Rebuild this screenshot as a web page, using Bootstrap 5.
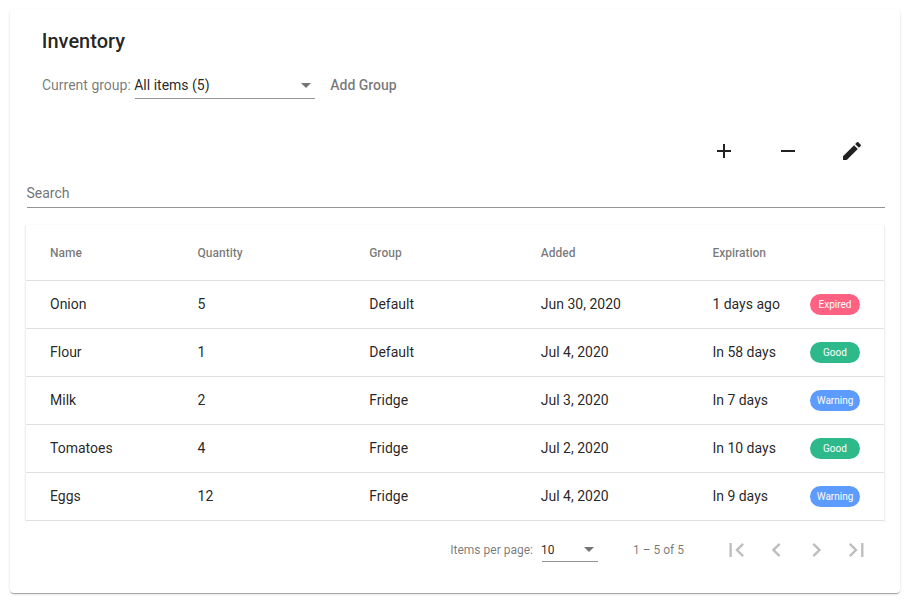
<!DOCTYPE html>
<html lang="en">
<head>
<meta charset="utf-8">
<meta name="viewport" content="width=device-width, initial-scale=1">
<title>Inventory</title>
<link href="https://cdn.jsdelivr.net/npm/bootstrap@5.3.0/dist/css/bootstrap.min.css" rel="stylesheet">
<style>
body { font-family: Roboto, "Liberation Sans", sans-serif; font-size: 14px; line-height: 20px; color: rgba(0,0,0,.87); background: #fff; }
.panel { margin: 10px; height: 583px; padding: 16px; border-radius: 4px; background: #fff; }
.raised { box-shadow: 0 2px 1px -1px rgba(0,0,0,.2), 0 1px 1px 0 rgba(0,0,0,.14), 0 1px 3px 0 rgba(0,0,0,.12); }
.title { font-size: 20px; font-weight: 500; line-height: 32px; margin: -1px 0 0 -.2px; }
.group-bar { height: 24px; margin-top: 16px; }
.picker { border-bottom: 1px solid #949494; color: rgba(0,0,0,.87); }
.group-picker { width: 180px; height: 26px; margin: 2px 0 0 4px; padding-bottom: 1px; }
.picker-value { margin-left: -.6px; }
.caret { width: 0; height: 0; border: 5px solid transparent; border-top-color: #757575; border-bottom: 0; margin-right: 4px; }
.plain { border: 0; background: none; padding: 0; color: inherit; }
.add-link { margin-left: 15.4px; font-weight: 500; }
.muted { color: rgba(0,0,0,.54); }
.tools { height: 36px; margin-top: 36px; }
.tools button { width: 64px; }
.search { display: block; width: 858px; height: 25px; margin: 14px 0 0 1px; padding: 0 0 5px; border: 0; border-bottom: 1px solid #949494; outline: 0; line-height: 20px; text-indent: -.5px; }
.search::placeholder { color: #757575; opacity: 1; }
.sheet { margin-top: 17px; height: 296px; }
.sheet table { table-layout: fixed; width: 100%; height: 296px; border-collapse: separate; border-spacing: 0; }
.sheet th, .sheet td { padding: 0; height: 48px; border-bottom: 1px solid #e0e0e0; vertical-align: middle; }
.sheet td { padding-bottom: 2px; }
.sheet th { height: 56px; font-size: 12px; font-weight: 500; color: rgba(0,0,0,.54); }
.sheet th:first-child, .sheet td:first-child { padding-left: 24px; }
.sheet td:last-child { padding-right: 24px; }
.tag { width: 50px; height: 21px; margin: 1px 0 -1px; border-radius: 11px; font-size: 10px; line-height: 21px; color: #fff; text-align: center; }
.tag-expired { background: #ff6183; }
.tag-good { background: #2eb98b; }
.tag-warning { background: #5c9bff; }
.pager { position: relative; height: 56px; padding: 2px 8px 0 0; font-size: 12px; background: #fff; }
.size-picker { width: 56px; height: 24px; margin: 0 35px 0 9px; }
.pager .picker-value { margin-left: -1px; }
.range { margin-right: 32px; }
.pager button { width: 40px; height: 40px; color: rgba(0,0,0,.26); }
svg { display: block; margin: auto; fill: currentColor; }
</style>
</head>
<body>
<main class="panel raised">
  <div class="px-3">
    <h1 class="title">Inventory</h1>
    <div class="group-bar d-flex align-items-center">
      <span class="muted">Current group:</span>
      <div class="picker group-picker d-flex align-items-center justify-content-between"><span class="picker-value">All items (5)</span><span class="caret"></span></div>
      <button class="plain add-link muted">Add Group</button>
    </div>
  </div>
  <div class="tools d-flex justify-content-end">
    <button class="plain" aria-label="Add"><svg width="24" height="24" viewBox="0 0 24 24"><path d="M19 13h-6v6h-2v-6H5v-2h6V5h2v6h6v2z"/></svg></button>
    <button class="plain" aria-label="Remove"><svg width="24" height="24" viewBox="0 0 24 24"><path d="M19 13H5v-2h14v2z"/></svg></button>
    <button class="plain" aria-label="Edit"><svg width="24" height="24" viewBox="0 0 24 24"><path d="M3 17.25V21h3.75L17.81 9.94l-3.75-3.75L3 17.25zM20.71 7.04c.39-.39.39-1.02 0-1.41l-2.34-2.34c-.39-.39-1.02-.39-1.41 0l-1.83 1.83 3.75 3.75 1.83-1.83z"/></svg></button>
  </div>
  <input class="search" type="text" placeholder="Search">
  <div class="sheet raised">
    <table>
      <thead><tr><th>Name</th><th>Quantity</th><th>Group</th><th>Added</th><th>Expiration</th></tr></thead>
      <tbody>
        <tr><td>Onion</td><td>5</td><td>Default</td><td>Jun 30, 2020</td><td><div class="d-flex justify-content-between align-items-center"><span>1 days ago</span><span class="tag tag-expired">Expired</span></div></td></tr>
        <tr><td>Flour</td><td>1</td><td>Default</td><td>Jul 4, 2020</td><td><div class="d-flex justify-content-between align-items-center"><span>In 58 days</span><span class="tag tag-good">Good</span></div></td></tr>
        <tr><td>Milk</td><td>2</td><td>Fridge</td><td>Jul 3, 2020</td><td><div class="d-flex justify-content-between align-items-center"><span>In 7 days</span><span class="tag tag-warning">Warning</span></div></td></tr>
        <tr><td>Tomatoes</td><td>4</td><td>Fridge</td><td>Jul 2, 2020</td><td><div class="d-flex justify-content-between align-items-center"><span>In 10 days</span><span class="tag tag-good">Good</span></div></td></tr>
        <tr><td>Eggs</td><td>12</td><td>Fridge</td><td>Jul 4, 2020</td><td><div class="d-flex justify-content-between align-items-center"><span>In 9 days</span><span class="tag tag-warning">Warning</span></div></td></tr>
      </tbody>
    </table>
  </div>
  <div class="pager muted d-flex align-items-center justify-content-end">
    <span>Items per page:</span>
    <div class="picker size-picker d-flex align-items-center justify-content-between"><span class="picker-value">10</span><span class="caret"></span></div>
    <span class="range">1 – 5 of 5</span>
    <button class="plain" aria-label="First page" disabled><svg width="28" height="28" viewBox="-.4 0 24 24"><path d="M18.41 16.59L13.82 12l4.59-4.59L17 6l-6 6 6 6zM6 6h2v12H6z"/></svg></button>
    <button class="plain" aria-label="Previous page" disabled><svg width="28" height="28" viewBox="-.4 0 24 24"><path d="M15.41 7.41L14 6l-6 6 6 6 1.41-1.41L10.83 12z"/></svg></button>
    <button class="plain" aria-label="Next page" disabled><svg width="28" height="28" viewBox="-.4 0 24 24"><path d="M10 6L8.59 7.41 13.17 12l-4.58 4.59L10 18l6-6z"/></svg></button>
    <button class="plain" aria-label="Last page" disabled><svg width="28" height="28" viewBox="-.4 0 24 24"><path d="M5.59 7.41L10.18 12l-4.59 4.59L7 18l6-6-6-6zM16 6h2v12h-2z"/></svg></button>
  </div>
</main>
<script src="https://cdn.jsdelivr.net/npm/bootstrap@5.3.0/dist/js/bootstrap.bundle.min.js"></script>
</body>
</html>
